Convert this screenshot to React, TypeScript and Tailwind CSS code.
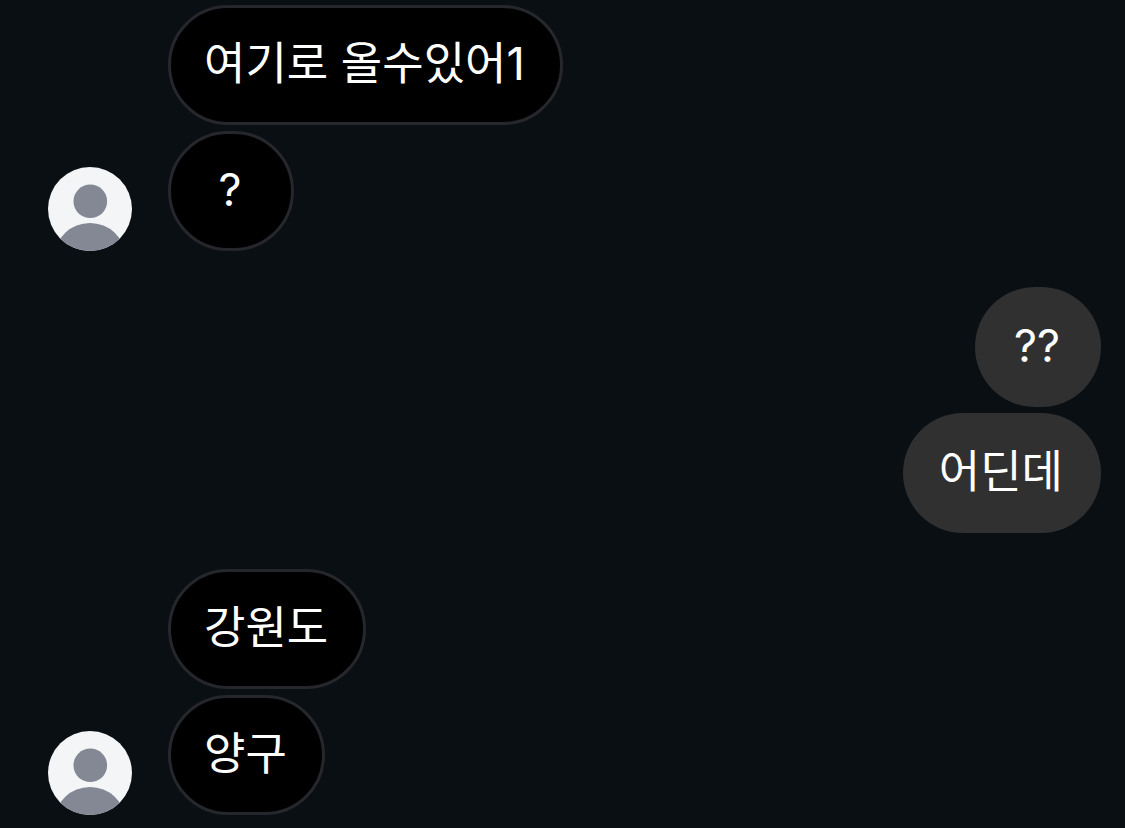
type Message = { id: number; text: string };
type Group = { id: number; from: "them" | "me"; messages: Message[] };

const groups: Group[] = [
  { id: 1, from: "them", messages: [{ id: 1, text: "여기로 올수있어1" }, { id: 2, text: "?" }] },
  { id: 2, from: "me", messages: [{ id: 3, text: "??" }, { id: 4, text: "어딘데" }] },
  { id: 3, from: "them", messages: [{ id: 5, text: "강원도" }, { id: 6, text: "양구" }] },
];

function Avatar() {
  return (
    <svg viewBox="0 0 84 84" className="size-[84px] shrink-0" role="img" aria-label="프로필">
      <defs>
        <clipPath id="avatar-circle">
          <circle cx="42" cy="42" r="42" />
        </clipPath>
      </defs>
      <g clipPath="url(#avatar-circle)">
        <rect width="84" height="84" fill="#f3f5f7" />
        <circle cx="42.3" cy="34.3" r="16.8" fill="#838894" />
        <ellipse cx="42" cy="89" rx="35" ry="33" fill="#838894" />
      </g>
    </svg>
  );
}

function Bubble({ text, mine }: { text: string; mine: boolean }) {
  return (
    <p
      className={
        mine
          ? "flex h-[120px] min-w-[126px] items-center justify-center rounded-[60px] bg-[#303030] pr-[38px] pb-[2px] pl-9"
          : "flex h-[120px] min-w-[126px] items-center justify-center rounded-[60px] border-3 border-[#25272c] bg-black pr-[35px] pb-[2px] pl-[33px]"
      }
    >
      {text}
    </p>
  );
}

export default function App() {
  return (
    <main
      lang="ko"
      className="flex min-h-screen flex-col gap-9 bg-[#0a0f14] pt-[5px] pr-6 pb-[13px] pl-12 font-['Inter','Noto_Sans_CJK_KR',sans-serif] text-[45px] leading-[60px] text-white"
    >
      {groups.map((group) =>
        group.from === "me" ? (
          <section key={group.id} className="flex flex-col items-end gap-[6px]">
            {group.messages.map((m) => (
              <Bubble key={m.id} text={m.text} mine />
            ))}
          </section>
        ) : (
          <section key={group.id} className="flex items-end gap-9">
            <Avatar />
            <div className="flex flex-col items-start gap-[6px]">
              {group.messages.map((m) => (
                <Bubble key={m.id} text={m.text} mine={false} />
              ))}
            </div>
          </section>
        ),
      )}
    </main>
  );
}
